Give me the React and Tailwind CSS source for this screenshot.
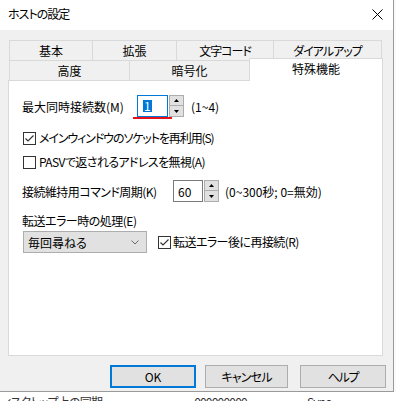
import React from "react";

const FONT = "font-['Meiryo_UI','Noto_Sans_CJK_JP','Noto_Sans',sans-serif] [font-feature-settings:'palt']";

function CheckBox({ checked }) {
  return (
    <div className="w-[13px] h-[13px] border border-[#333333] bg-white flex items-center justify-center shrink-0">
      {checked && (
        <svg width="11" height="11" viewBox="0 0 11 11">
          <path d="M1.5 5.5 L4 8 L9.5 2.5" fill="none" stroke="#333333" strokeWidth="1.2" />
        </svg>
      )}
    </div>
  );
}

function Spinner() {
  return (
    <div className="flex flex-col w-[15px] h-[22px] ml-[1px]">
      <div className="h-[11px] bg-[#e1e1e1] border border-[#adadad] flex items-center justify-center">
        <svg width="5" height="3" viewBox="0 0 5 3">
          <path d="M0 3 L2.5 0 L5 3 Z" fill="#000" />
        </svg>
      </div>
      <div className="h-[11px] bg-[#e1e1e1] border border-t-0 border-[#adadad] flex items-center justify-center">
        <svg width="5" height="3" viewBox="0 0 5 3">
          <path d="M0 0 L2.5 3 L5 0 Z" fill="#000" />
        </svg>
      </div>
    </div>
  );
}

function Tab({ w, children, last, tight }) {
  return (
    <div
      className={`h-[20px] border-t border-l border-[#d9d9d9] flex items-center justify-center leading-[14px] pt-[1px] ${last ? "border-r" : ""} ${tight ? "tracking-[-1px]" : ""}`}
      style={{ width: w }}
    >
      {children}
    </div>
  );
}

export default function App() {
  return (
    <div className={`w-[396px] h-[401px] bg-[#f7f7f7] overflow-hidden text-[12px] text-black ${FONT}`}>
      <div className="flex">
        <div className="w-[394px] h-[392px] flex flex-col border-r border-b border-[#9a9a9a] shrink-0">
          {/* Title bar */}
          <div className="h-[30px] bg-white flex items-center justify-between pl-[8px] pr-[10px]">
            <span className="leading-[14px] pb-[2px] tracking-[-1px]">ホストの設定</span>
            <svg width="11" height="11" viewBox="0 0 11 11" className="mb-[2px]">
              <path d="M0.5 0.5 L10.5 10.5 M10.5 0.5 L0.5 10.5" stroke="#000" strokeWidth="1" />
            </svg>
          </div>
          {/* Body */}
          <div className="flex-1 bg-[#f0f0f0] flex flex-col pt-[10px]">
            {/* Tab row 1 */}
            <div className="flex ml-[9px]">
              <Tab w={83}>基本</Tab>
              <Tab w={84}>拡張</Tab>
              <Tab w={97} tight>文字コード</Tab>
              <Tab w={109} last tight>ダイアルアップ</Tab>
            </div>
            {/* Tab row 2 */}
            <div className="flex ml-[9px] h-[20px]">
              <Tab w={120}>高度</Tab>
              <Tab w={120}>暗号化</Tab>
              <div className="relative z-10 -mt-[2px] h-[23px] w-[134px] bg-white border-t border-l border-r border-[#d9d9d9] flex justify-center pt-[3px] leading-[14px]">
                特殊機能
              </div>
            </div>
            {/* Panel */}
            <div className="ml-[8px] w-[375px] h-[276px] bg-white border border-[#d9d9d9] flex flex-col pl-[13px]">
              {/* Row 1 */}
              <div className="mt-[14px] h-[22px] flex items-center">
                <span className="w-[115px] leading-[14px] pt-[2px]">最大同時接続数(M)</span>
                <div className="relative flex">
                  <div className="w-[31px] h-[22px] border border-[#0078d7] bg-white flex items-center pl-[5px]">
                    <span className="bg-[#0078d7] text-white leading-[12px] h-[12px] px-[1px] text-[12px]">1</span>
                  </div>
                  <Spinner />
                  <div className="absolute left-[-4px] top-[22px] w-[39px] h-[2px] bg-[#e8101a]" />
                </div>
                <span className="ml-[7px] leading-[14px] pt-[2px]">(1~4)</span>
              </div>
              {/* Checkbox 1 */}
              <div className="mt-[13px] h-[16px] flex items-center pl-[1px]">
                <CheckBox checked />
                <span className="ml-[3px] leading-[14px] tracking-[-1.1px]">メインウィンドウのソケットを再利用(S)</span>
              </div>
              {/* Checkbox 2 */}
              <div className="mt-[8px] h-[16px] flex items-center pl-[1px]">
                <CheckBox />
                <span className="ml-[3px] leading-[14px] tracking-[-0.6px]">PASVで返されるアドレスを無視(A)</span>
              </div>
              {/* Row K */}
              <div className="mt-[10px] h-[22px] flex items-center">
                <span className="w-[151px] leading-[14px] pt-[1px] tracking-[-0.55px]">接続維持用コマンド周期(K)</span>
                <div className="w-[30px] h-[22px] border border-[#7a7a7a] bg-white flex items-center pl-[4px] leading-[14px] pt-[1px]">60</div>
                <Spinner />
                <span className="ml-[6px] leading-[14px] pt-[1px]">(0~300秒; 0=無効)</span>
              </div>
              {/* Label E */}
              <div className="mt-[11px] h-[16px] flex items-center leading-[14px] tracking-[-0.5px]">転送エラー時の処理(E)</div>
              {/* Select row */}
              <div className="mt-[2px] h-[22px] flex items-center">
                <div className="ml-[1px] w-[124px] h-[22px] bg-[#e1e1e1] border border-[#adadad] flex items-center justify-between pl-[4px] pr-[7px]">
                  <span className="leading-[14px] pt-[1px]">毎回尋ねる</span>
                  <svg width="8" height="5" viewBox="0 0 8 5">
                    <path d="M0.5 0.5 L4 4 L7.5 0.5" fill="none" stroke="#6e6e6e" strokeWidth="1" />
                  </svg>
                </div>
                <div className="ml-[11px] flex items-center">
                  <CheckBox checked />
                  <span className="ml-[2px] leading-[14px] tracking-[-0.55px]">転送エラー後に再接続(R)</span>
                </div>
              </div>
            </div>
            {/* Buttons */}
            <div className="mt-[9px] flex h-[23px]">
              <div className="ml-[110px] w-[86px] h-[23px] bg-[#e1e1e1] border-2 border-[#0078d7] flex items-center justify-center leading-[14px]">OK</div>
              <div className="ml-[9px] w-[83px] h-[23px] bg-[#e1e1e1] border border-[#adadad] flex items-center justify-center leading-[14px] tracking-[-0.8px]">キャンセル</div>
              <div className="ml-[12px] w-[86px] h-[23px] bg-[#e1e1e1] border border-[#adadad] flex items-center justify-center leading-[14px] tracking-[-1.2px]">ヘルプ</div>
            </div>
          </div>
        </div>
        <div className="flex-1 bg-[#fafafa]" />
      </div>
      {/* Background window content peeking below */}
      <div className="h-[9px] overflow-hidden bg-white flex text-[#333] leading-[14px] pt-[3px] tracking-[-0.8px]">
        <span className="ml-[2px]">ィスクトップ上の同期</span>
        <span className="ml-[92px]">000000000</span>
        <span className="ml-[60px]">Sync</span>
      </div>
    </div>
  );
}
